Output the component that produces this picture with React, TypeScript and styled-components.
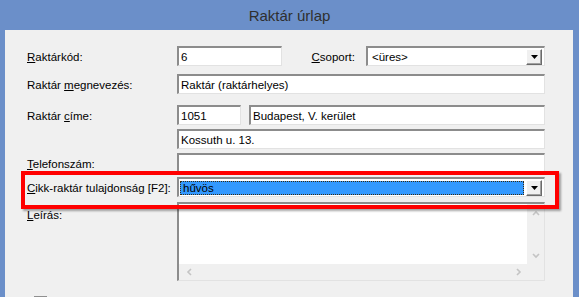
import React from "react";
import styled, { createGlobalStyle } from "styled-components";

const Global = createGlobalStyle`
  html, body { margin: 0; padding: 0; }
  body { font-family: "Liberation Sans", Arial, sans-serif; }
`;

const Window = styled.div`
  width: 579px;
  height: 297px;
  overflow: hidden;
  background: #6b8fc9;
  display: flex;
  flex-direction: column;
  position: relative;
`;

const TitleBar = styled.div`
  flex: none;
  height: 30px;
  display: flex;
  align-items: center;
  justify-content: center;
  font-size: 15px;
  color: #2f2f2f;
  padding-top: 1px;
  box-sizing: border-box;
`;

const Client = styled.div`
  flex: 1;
  min-height: 0;
  overflow: hidden;
  margin: 0 6px 0 5px;
  background: #f0f0f0;
  padding: 16px 28px 0 22px;
  font-size: 11.5px;
  color: #000;
`;

const Row = styled.div<{ $mt: number; $h?: number }>`
  display: flex;
  align-items: center;
  margin-top: ${(p) => p.$mt}px;
  height: ${(p) => p.$h ?? 20}px;
`;

const Label = styled.div<{ $top?: boolean }>`
  width: 150px;
  flex: none;
  align-self: ${(p) => (p.$top ? "flex-start" : "center")};
  margin-top: ${(p) => (p.$top ? "5px" : "0")};
  padding-top: 2px;
  white-space: nowrap;
`;

const InlineLabel = styled.div`
  margin-left: auto;
  margin-right: 11px;
  padding-top: 2px;
  white-space: nowrap;
`;

const Key = styled.span`
  text-decoration: underline;
  text-underline-offset: 1px;
`;

const Field = styled.div<{ $w?: number; $ml?: number }>`
  box-sizing: border-box;
  height: 20px;
  ${(p) => (p.$w ? `width: ${p.$w}px; flex: none;` : "flex: 1;")}
  margin-left: ${(p) => p.$ml ?? 0}px;
  background: #fff;
  border-style: solid;
  border-width: 2px 1px 1px 2px;
  border-color: #8c8c8c #e2e2e2 #e2e2e2 #8c8c8c;
  display: flex;
  align-items: center;
  padding-left: 2px;
  white-space: nowrap;
  overflow: hidden;
`;

const Combo = styled(Field)`
  padding: 0 2px 0 1px;
`;

const ComboText = styled.div<{ $selected?: boolean }>`
  flex: 1;
  height: 14px;
  display: flex;
  align-items: center;
  padding-left: 2px;
  box-sizing: border-box;
  background: ${(p) => (p.$selected ? "#3399ff" : "transparent")};
  border: 1px ${(p) => (p.$selected ? "dotted #3a2b10" : "solid transparent")};
  color: #000;
  margin-right: 2px;
`;

const DropButton = styled.div`
  width: 16px;
  height: 16px;
  box-sizing: border-box;
  flex: none;
  background: #f0f0f0;
  border-style: solid;
  border-width: 1px;
  border-color: #ffffff #6a6a6a #6a6a6a #ffffff;
  box-shadow: inset -1px -1px 0 #a0a0a0;
  display: flex;
  align-items: center;
  justify-content: center;
`;

const Arrow = () => (
  <svg width="7" height="4" viewBox="0 0 7 4">
    <path d="M0 0H7L3.5 4Z" fill="#000" />
  </svg>
);

const TextArea = styled.div`
  flex: 1;
  box-sizing: border-box;
  height: 79px;
  background: #fff;
  border-style: solid;
  border-width: 2px 1px 1px 2px;
  border-color: #8c8c8c #e2e2e2 #e2e2e2 #8c8c8c;
  display: grid;
  grid-template-columns: 1fr 17px;
  grid-template-rows: 1fr 16px;
`;

const VScroll = styled.div`
  background: #f0f0f0;
  display: flex;
  flex-direction: column;
  justify-content: space-between;
  align-items: center;
  padding: 6px 0 4px;
`;

const HScroll = styled.div`
  background: #f0f0f0;
  grid-column: 1 / 3;
  display: flex;
  justify-content: space-between;
  align-items: center;
  padding: 0 22px 0 7px;
`;

const Chevron = ({ dir }: { dir: "up" | "down" | "left" | "right" }) => {
  const paths: Record<string, string> = {
    up: "M1 5L4 2L7 5",
    down: "M1 2L4 5L7 2",
    left: "M5 1L2 4L5 7",
    right: "M3 1L6 4L3 7",
  };
  return (
    <svg width="8" height="8" viewBox="0 0 8 8">
      <path d={paths[dir]} fill="none" stroke="#c4c4c4" strokeWidth="1.6" />
    </svg>
  );
};

const Check = styled.div`
  margin: 15px 0 0 7px;
  width: 13px;
  height: 13px;
  box-sizing: border-box;
  border: 1px solid #8f8f8f;
  border-top-width: 2px;
  background: #fff;
`;

const Highlight = styled.div`
  position: absolute;
  left: 21px;
  top: 171px;
  width: 538px;
  height: 38px;
  box-sizing: border-box;
  border: 4px solid #ff0000;
  box-shadow: 2px 2px 2px rgba(0, 0, 0, 0.35);
  pointer-events: none;
`;

export default function App() {
  return (
    <>
      <Global />
      <Window>
        <TitleBar>Raktár úrlap</TitleBar>
        <Client>
          <Row $mt={0}>
            <Label>
              <Key>R</Key>aktárkód:
            </Label>
            <Field $w={105}>6</Field>
            <InlineLabel>
              <Key>C</Key>soport:
            </InlineLabel>
            <Combo $w={179}>
              <ComboText>&lt;üres&gt;</ComboText>
              <DropButton>
                <Arrow />
              </DropButton>
            </Combo>
          </Row>
          <Row $mt={8}>
            <Label>
              Raktár <Key>m</Key>egnevezés:
            </Label>
            <Field>Raktár (raktárhelyes)</Field>
          </Row>
          <Row $mt={11}>
            <Label>
              Raktár <Key>c</Key>íme:
            </Label>
            <Field $w={64}>1051</Field>
            <Field $ml={8}>Budapest, V. kerület</Field>
          </Row>
          <Row $mt={4}>
            <Label />
            <Field>Kossuth u. 13.</Field>
          </Row>
          <Row $mt={4}>
            <Label>
              <Key>T</Key>elefonszám:
            </Label>
            <Field />
          </Row>
          <Row $mt={4}>
            <Label>
              <Key>C</Key>ikk-raktár tulajdonság [F2]:
            </Label>
            <Combo>
              <ComboText $selected>hűvös</ComboText>
              <DropButton>
                <Arrow />
              </DropButton>
            </Combo>
          </Row>
          <Row $mt={5} $h={79}>
            <Label $top>
              <Key>L</Key>eírás:
            </Label>
            <TextArea>
              <div />
              <VScroll>
                <Chevron dir="up" />
                <Chevron dir="down" />
              </VScroll>
              <HScroll>
                <Chevron dir="left" />
                <Chevron dir="right" />
              </HScroll>
            </TextArea>
          </Row>
          <Check />
        </Client>
        <Highlight />
      </Window>
    </>
  );
}
